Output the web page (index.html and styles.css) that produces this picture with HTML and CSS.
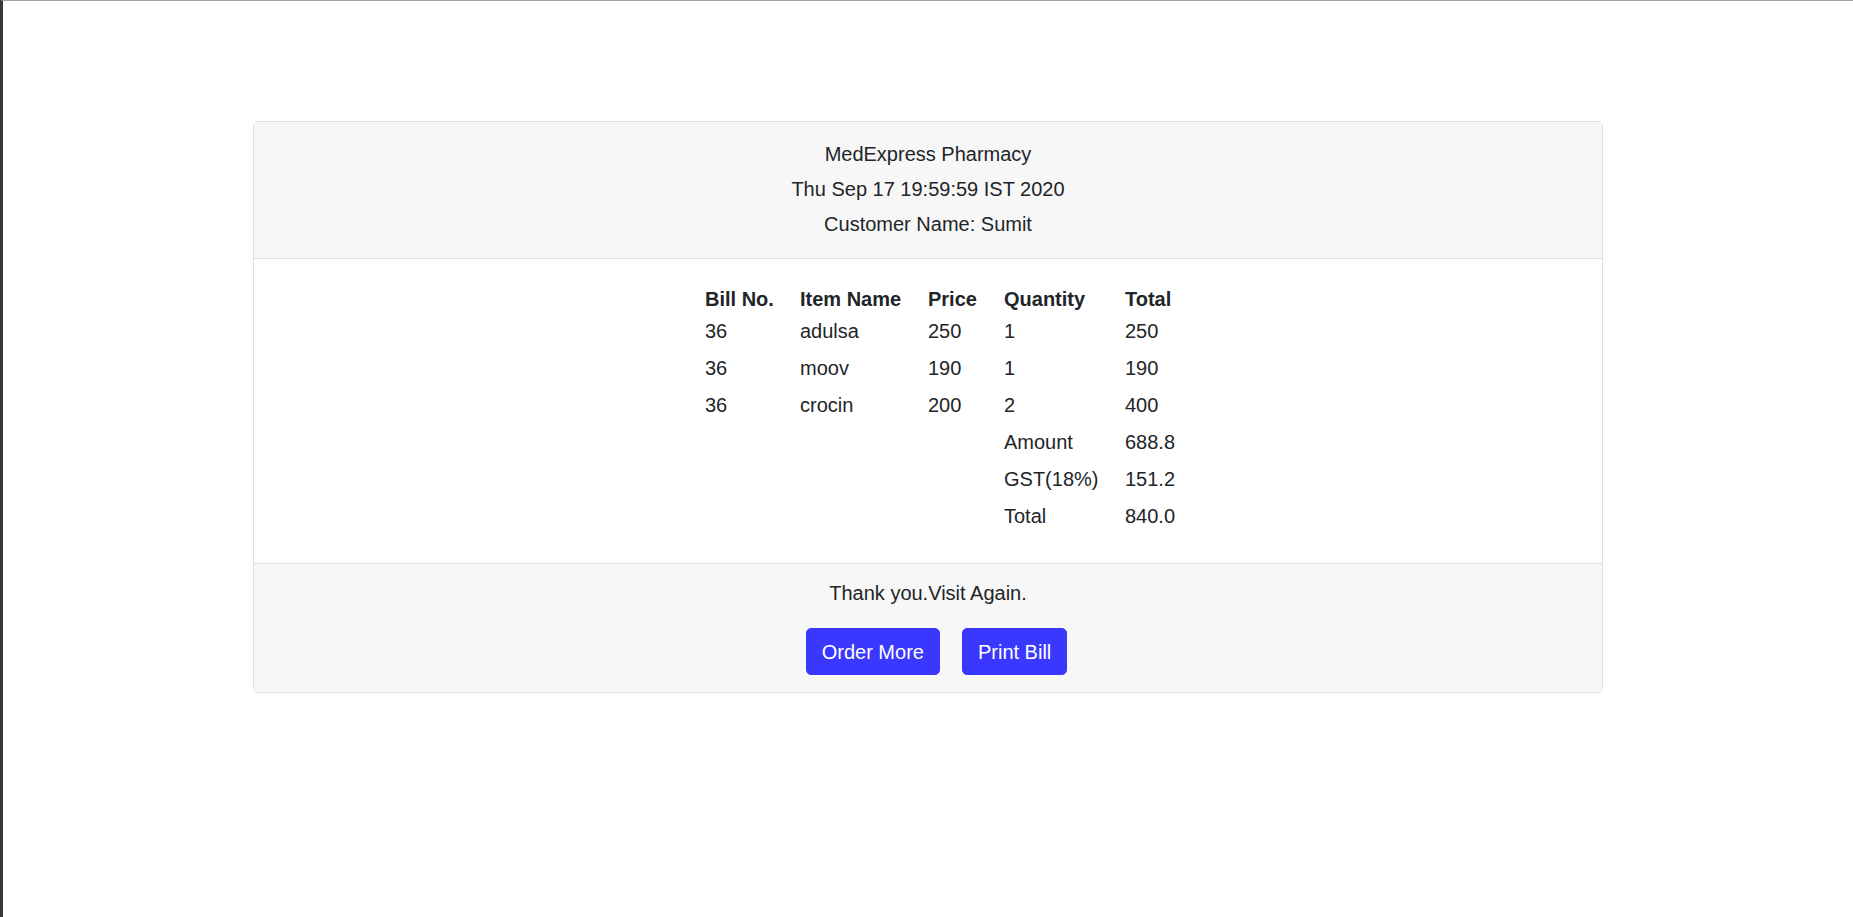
FILE: index.html
```html
<!DOCTYPE html>
<html lang="en">
<head>
<meta charset="utf-8">
<title>MedExpress Pharmacy - Bill</title>
<link rel="stylesheet" href="styles.css">
</head>
<body>
<div class="page">
  <div class="card">
    <div class="card-header">
      <div class="line">MedExpress Pharmacy</div>
      <div class="line">Thu Sep 17 19:59:59 IST 2020</div>
      <div class="line">Customer Name: Sumit</div>
    </div>
    <div class="card-body">
      <table class="bill">
        <colgroup>
          <col class="c1"><col class="c2"><col class="c3"><col class="c4"><col class="c5">
        </colgroup>
        <thead>
          <tr><th>Bill No.</th><th>Item Name</th><th>Price</th><th>Quantity</th><th>Total</th></tr>
        </thead>
        <tbody>
          <tr><td>36</td><td>adulsa</td><td>250</td><td>1</td><td>250</td></tr>
          <tr><td>36</td><td>moov</td><td>190</td><td>1</td><td>190</td></tr>
          <tr><td>36</td><td>crocin</td><td>200</td><td>2</td><td>400</td></tr>
          <tr><td></td><td></td><td></td><td>Amount</td><td>688.8</td></tr>
          <tr><td></td><td></td><td></td><td>GST(18%)</td><td>151.2</td></tr>
          <tr><td></td><td></td><td></td><td>Total</td><td>840.0</td></tr>
        </tbody>
      </table>
    </div>
    <div class="card-footer">
      <div class="thanks">Thank you.Visit Again.</div>
      <div class="actions">
        <button class="btn">Order More</button>
        <button class="btn">Print Bill</button>
      </div>
    </div>
  </div>
</div>
</body>
</html>
```

FILE: styles.css
```css
html, body {
  margin: 0;
  padding: 0;
  height: 100%;
}
body {
  background: #ffffff;
  font-family: "Liberation Sans", Arial, sans-serif;
  font-size: 20px;
  color: #212529;
  border-top: 1px solid #a2a2a2;
  border-left: 3px solid #3b3935;
  box-sizing: border-box;
  overflow: hidden;
}
.page {
  padding-top: 120px;
}
.card {
  width: 1350px;
  margin: 0 auto;
  border: 1px solid #dfdfdf;
  border-radius: 5px;
  box-sizing: border-box;
  overflow: hidden;
}
.card-header {
  background: #f7f7f7;
  border-bottom: 1px solid #dfdfdf;
  padding: 15px 25px 16px;
  text-align: center;
}
.line {
  line-height: 35px;
}
.card-body {
  padding: 25px 25px 28px 75px;
  display: flex;
  justify-content: center;
}
.bill {
  border-collapse: collapse;
  table-layout: fixed;
  width: 496px;
}
.c1 { width: 95px; }
.c2 { width: 128px; }
.c3 { width: 76px; }
.c4 { width: 121px; }
.c5 { width: 76px; }
.bill th, .bill td {
  padding: 0;
  text-align: left;
  white-space: nowrap;
}
.bill th {
  font-weight: bold;
  height: 29px;
  line-height: 27px;
  vertical-align: bottom;
}
.bill td {
  height: 37px;
  line-height: 37px;
}
.card-footer {
  background: #f7f7f7;
  border-top: 1px solid #dfdfdf;
  padding: 14px 25px 17px;
  text-align: center;
}
.thanks {
  line-height: 30px;
}
.actions {
  display: flex;
  justify-content: center;
  gap: 22px;
  padding-left: 17px;
  margin-top: 20px;
}
.btn {
  font-family: "Liberation Sans", Arial, sans-serif;
  font-size: 20px;
  line-height: 30px;
  color: #ffffff;
  background: #3a37fe;
  border: 1px solid #3a37fe;
  border-radius: 5px;
  padding: 7.5px 15px;
  cursor: pointer;
}
```
